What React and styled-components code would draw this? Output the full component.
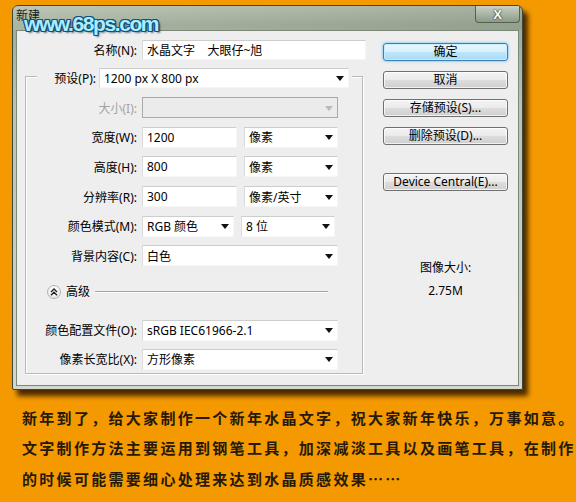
import React from 'react';
import styled, { createGlobalStyle } from 'styled-components';

const GlobalStyle = createGlobalStyle`
  html, body { margin: 0; padding: 0; }
  body {
    background: #f49a00;
    font-family: "Noto Sans", "Noto Sans CJK SC", sans-serif;
  }
`;

// whole picture: orange backdrop with the dialog and the caption under it
const Page = styled.div`
  position: relative;
  width: 576px;
  height: 502px;
  overflow: hidden;
  background: #f49a00;
  display: flex;
  flex-direction: column;
`;

// site watermark painted over the title bar
const Watermark = styled.div`
  position: absolute;
  left: 24px;
  top: 12px;
  font-family: "Liberation Sans", Arial, sans-serif;
  font-weight: 700;
  font-size: 21px;
  letter-spacing: -1.4px;
  color: #a9edff;
  text-shadow:
    1px 0 0 #164f7c, -1px 0 0 #164f7c, 0 1px 0 #164f7c, 0 -1px 0 #164f7c,
    1px 1px 0 #164f7c, -1px -1px 0 #164f7c, 1px -1px 0 #164f7c, -1px 1px 0 #164f7c,
    2px 2px 2px rgba(10, 40, 70, 0.6);
`;

const Dialog = styled.div`
  margin: 5px 0 0 12px;
  width: 511px;
  height: 385px;
  box-sizing: border-box;
  border: 1px solid #3b4839;
  border-radius: 6px 6px 2px 2px;
  background: linear-gradient(180deg, #b4bfac 0%, #9eab98 5%, #b9c2b3 25%, #d3d8cf 100%);
  display: flex;
  flex-direction: column;
  box-shadow: 5px 6px 5px rgba(45, 22, 0, 0.85);
`;

const TitleBar = styled.div`
  height: 24px;
  display: flex;
  align-items: flex-start;
  padding: 0 2px 0 2px;
  background: linear-gradient(90deg, rgba(255,255,255,0.12), rgba(60,80,60,0.12));
`;

const TitleText = styled.span`
  margin: 3px 0 0 1px;
  font-size: 12px;
  line-height: 14px;
  color: #1b1b1b;
`;

const CloseButton = styled.div`
  margin-left: auto;
  width: 45px;
  height: 17px;
  box-sizing: border-box;
  border: 1px solid #55624f;
  border-top: none;
  border-radius: 0 0 4px 4px;
  background: linear-gradient(180deg, #c9d1c5 0%, #a9b5a5 50%, #8e9b8a 100%);
  display: flex;
  align-items: center;
  justify-content: center;
  font-family: "Liberation Sans", Arial, sans-serif;
  font-weight: 700;
  font-size: 13px;
  color: #ffffff;
  text-shadow: 0 0 2px #26301f, 0 0 1px #26301f;
`;

const Client = styled.div`
  flex: 1;
  margin: 0 3px 3px 3px;
  box-sizing: border-box;
  border: 1px solid #7b8878;
  background: #eeeeee;
  display: flex;
  padding: 9px 10px 0 8px;
  color: #000;
  font-size: 12px;
`;

const FormColumn = styled.div`
  width: 341px;
  display: flex;
  flex-direction: column;
`;

const FieldRow = styled.div`
  display: grid;
  grid-template-columns: ${({ $label }) => $label || 111}px 1fr;
  column-gap: 5px;
  align-items: center;
  height: ${({ $h }) => $h || 21}px;
`;

const Label = styled.span`
  text-align: right;
  white-space: nowrap;
  color: ${({ $disabled }) => ($disabled ? '#a3a3a3' : '#000')};
`;

const Fields = styled.div`
  display: flex;
  gap: 7px;
  height: 100%;
`;

const TextField = styled.div`
  width: ${({ $w }) => $w}px;
  height: 100%;
  box-sizing: border-box;
  background: #fff;
  border: 1px solid #f6f6f6;
  border-top-color: #cdcdcd;
  border-left-color: #dadada;
  padding-left: 4px;
  display: flex;
  align-items: center;
  white-space: nowrap;
`;

const Select = styled.div`
  width: ${({ $w }) => $w}px;
  height: 100%;
  box-sizing: border-box;
  background: ${({ $disabled }) => ($disabled ? '#ebebeb' : '#fff')};
  border: 1px solid ${({ $disabled }) => ($disabled ? '#a9a9a9' : '#f6f6f6')};
  border-top-color: ${({ $disabled }) => ($disabled ? '#a9a9a9' : '#cdcdcd')};
  border-left-color: ${({ $disabled }) => ($disabled ? '#a9a9a9' : '#dadada')};
  padding: 0 4px 0 4px;
  display: flex;
  align-items: center;
  justify-content: space-between;
  white-space: nowrap;
`;

const Arrow = styled.span`
  width: 0;
  height: 0;
  border-left: 4px solid transparent;
  border-right: 4px solid transparent;
  border-top: 5px solid ${({ $disabled }) => ($disabled ? '#b9b9b9' : '#111')};
  margin-top: 1px;
`;

const GroupBox = styled.div`
  margin-top: 16px;
  width: 338px;
  box-sizing: border-box;
  border: 1px solid #b9b9b9;
  box-shadow: inset 1px 1px 0 #fff, 1px 1px 0 #fff;
  padding-bottom: 3px;
  display: flex;
  flex-direction: column;
`;

const Legend = styled.div`
  align-self: flex-start;
  margin: -9px 0 0 11px;
  padding: 0 3px 0 0;
  height: 20px;
  background: #eeeeee;
  display: flex;
  align-items: center;
  gap: 3px;
`;

const LegendLabel = styled.span`
  width: 59px;
  text-align: right;
  white-space: nowrap;
`;

const Rows = styled.div`
  margin-top: ${({ $top }) => $top}px;
  display: flex;
  flex-direction: column;
  gap: ${({ $gap }) => $gap}px;
`;

const AdvancedRow = styled.div`
  margin-top: 18.5px;
  height: 14px;
  padding-left: 21px;
  display: flex;
  align-items: center;
  gap: 5px;
`;

const Toggle = styled.span`
  width: 14px;
  height: 14px;
  box-sizing: border-box;
  border-radius: 50%;
  border: 1px solid #b4b4b4;
  background: radial-gradient(circle at 50% 35%, #ffffff 0%, #f1f1f1 55%, #d6d6d6 100%);
  display: flex;
  align-items: center;
  justify-content: center;
`;

const AdvancedText = styled.span`
  line-height: 14px;
`;

const Rule = styled.span`
  width: 233px;
  height: 1px;
  background: #a4a4a4;
  box-shadow: 0 1px 0 #fff;
`;

const SideColumn = styled.div`
  margin-left: auto;
  width: 125px;
  padding-top: 3px;
  display: flex;
  flex-direction: column;
  gap: 10px;
`;

const PushButton = styled.div`
  height: 18px;
  box-sizing: border-box;
  border: 1px solid ${({ $primary }) => ($primary ? '#3c7fb1' : '#707070')};
  border-radius: 3px;
  margin-top: ${({ $gapAbove }) => $gapAbove || 0}px;
  background: ${({ $primary }) =>
    $primary
      ? 'linear-gradient(180deg, #eaf6fd 0%, #d9f0fc 48%, #bee6fd 52%, #a7d9f5 100%)'
      : 'linear-gradient(180deg, #f4f4f4 0%, #ebebeb 48%, #dddddd 52%, #cfcfcf 100%)'};
  box-shadow: ${({ $primary }) =>
    $primary ? '0 0 3px #58b6ec, inset 0 0 0 1px #c8ecfd' : 'inset 0 0 0 1px rgba(255,255,255,0.7)'};
  display: flex;
  align-items: center;
  justify-content: center;
  white-space: nowrap;
  line-height: 16px;
`;

const SizeInfo = styled.div`
  margin-top: 54.5px;
  text-align: center;
  line-height: 23px;
`;

const Caption = styled.div`
  margin-top: 12.5px;
  padding-left: 22px;
  font-family: "Noto Sans CJK SC", sans-serif;
  font-weight: 700;
  font-size: 15px;
  letter-spacing: 2.3px;
  line-height: 30.5px;
  color: #26190a;
`;

const CaptionLine = styled.div`
  white-space: nowrap;
`;

const ChevronsUp = () => (
  <svg width="8" height="8" viewBox="0 0 8 8">
    <path d="M1 4 L4 1 L7 4 M1 7.2 L4 4.2 L7 7.2" fill="none" stroke="#222" strokeWidth="1.3" />
  </svg>
);

const SelectBox = ({ w, text, disabled }) => (
  <Select $w={w} $disabled={disabled}>
    <span>{text}</span>
    <Arrow $disabled={disabled} />
  </Select>
);

const mainRows = [
  { label: '宽度(W):', value: '1200', unit: '像素' },
  { label: '高度(H):', value: '800', unit: '像素' },
  { label: '分辨率(R):', value: '300', unit: '像素/英寸' },
];

const captionLines = [
  '新年到了，给大家制作一个新年水晶文字，祝大家新年快乐，万事如意。',
  '文字制作方法主要运用到钢笔工具，加深减淡工具以及画笔工具，在制作',
  '的时候可能需要细心处理来达到水晶质感效果……',
];

const App = () => {
  return (
    <Page>
      <GlobalStyle />
      <Dialog>
        <TitleBar>
          <TitleText>新建</TitleText>
          <CloseButton>X</CloseButton>
        </TitleBar>
        <Client>
          <FormColumn>
            <FieldRow $label={112} $h={20}>
              <Label>名称(N):</Label>
              <Fields>
                <TextField $w={224}>水晶文字&nbsp;&nbsp;&nbsp;&nbsp;大眼仔~旭</TextField>
              </Fields>
            </FieldRow>

            <GroupBox>
              <Legend>
                <LegendLabel>预设(P):</LegendLabel>
                <SelectBox w={250} text="1200 px X 800 px" />
              </Legend>

              <Rows $top={9} $gap={8.7}>
                <FieldRow>
                  <Label $disabled>大小(I):</Label>
                  <Fields>
                    <SelectBox w={196} text="" disabled />
                  </Fields>
                </FieldRow>
                {mainRows.map((row) => (
                  <FieldRow key={row.label}>
                    <Label>{row.label}</Label>
                    <Fields>
                      <TextField $w={95}>{row.value}</TextField>
                      <SelectBox w={94} text={row.unit} />
                    </Fields>
                  </FieldRow>
                ))}
                <FieldRow>
                  <Label>颜色模式(M):</Label>
                  <Fields>
                    <SelectBox w={92} text="RGB 颜色" />
                    <SelectBox w={94} text="8 位" />
                  </Fields>
                </FieldRow>
                <FieldRow>
                  <Label>背景内容(C):</Label>
                  <Fields>
                    <SelectBox w={196} text="白色" />
                  </Fields>
                </FieldRow>
              </Rows>

              <AdvancedRow>
                <Toggle>
                  <ChevronsUp />
                </Toggle>
                <AdvancedText>高级</AdvancedText>
                <Rule />
              </AdvancedRow>

              <Rows $top={21} $gap={8}>
                <FieldRow>
                  <Label>颜色配置文件(O):</Label>
                  <Fields>
                    <SelectBox w={196} text="sRGB IEC61966-2.1" />
                  </Fields>
                </FieldRow>
                <FieldRow>
                  <Label>像素长宽比(X):</Label>
                  <Fields>
                    <SelectBox w={196} text="方形像素" />
                  </Fields>
                </FieldRow>
              </Rows>
            </GroupBox>
          </FormColumn>

          <SideColumn>
            <PushButton $primary>确定</PushButton>
            <PushButton>取消</PushButton>
            <PushButton>存储预设(S)...</PushButton>
            <PushButton>删除预设(D)...</PushButton>
            <PushButton $gapAbove={18}>Device Central(E)...</PushButton>
            <SizeInfo>
              <div>图像大小:</div>
              <div>2.75M</div>
            </SizeInfo>
          </SideColumn>
        </Client>
      </Dialog>

      <Caption>
        {captionLines.map((line) => (
          <CaptionLine key={line}>{line}</CaptionLine>
        ))}
      </Caption>

      <Watermark>www.68ps.com</Watermark>
    </Page>
  );
};

export default App;
